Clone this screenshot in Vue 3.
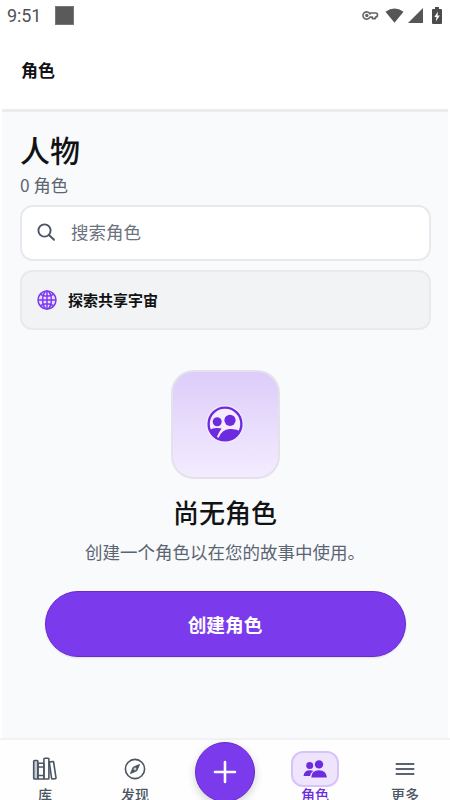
<script setup>
const emptyTitle = '尚无角色'
</script>

<template>
  <div class="screen">
    <header class="top">
      <div class="status">
        <span class="time">9:51</span>
        <span class="square"></span>
        <div class="status-icons">
          <svg class="key" width="17" height="11" viewBox="0 0 18 12" fill="none" stroke="#666" stroke-width="1.8">
            <path d="M8.4 4.3A4 4 0 1 0 8.4 7.7H11V9.4H14.4V7.6A1.8 1.8 0 0 0 14.6 3.3H8.8Z" stroke-linejoin="round" />
            <circle cx="5" cy="6" r="1" />
          </svg>
          <svg class="wifi" width="19" height="15" viewBox="0 0 20 15"><path d="M0.5 3.5Q10-3 19.5 3.5L10 15Z" fill="#565656" /></svg>
          <svg class="signal" width="15" height="15" viewBox="0 0 15 15"><path d="M15 0V15H0Z" fill="#565656" /></svg>
          <svg class="battery" width="10" height="17" viewBox="0 0 10 17">
            <path d="M3 0H7V2H9Q10 2 10 3V16Q10 17 9 17H1Q0 17 0 16V3Q0 2 1 2H3Z" fill="#4b4b4b" />
            <path d="M6 4.5L2.3 10H4.5L3.8 14.5L7.8 8.6H5.5Z" fill="#fff" />
          </svg>
        </div>
      </div>
      <div class="app-title">角色</div>
    </header>

    <main class="content">
      <h1>人物</h1>
      <p class="count">0 角色</p>
      <div class="search">
        <svg width="20" height="20" viewBox="0 0 20 20" fill="none" stroke="#4b5563" stroke-width="1.9" stroke-linecap="round">
          <circle cx="8.5" cy="8.5" r="6.1" /><path d="M13 13L18 17.8" />
        </svg>
        <span>搜索角色</span>
      </div>
      <div class="explore">
        <svg width="20" height="20" viewBox="0 0 20 20" fill="none" stroke="#7c3aed" stroke-width="1.5">
          <circle cx="10" cy="10" r="9" fill="#e9dcfd" /><ellipse cx="10" cy="10" rx="4.4" ry="9" />
          <path d="M10 1V19M1 10H19M3.4 4.4Q10 8.2 16.6 4.4M3.4 15.6Q10 11.8 16.6 15.6" />
        </svg>
        <span>探索共享宇宙</span>
      </div>

      <section class="empty">
        <div class="tile">
          <svg width="38" height="38" viewBox="-1 -1 38 38">
            <defs><clipPath id="disc"><circle cx="18" cy="18" r="16.7" /></clipPath></defs>
            <circle cx="18" cy="18" r="18.8" fill="#f5edff" />
            <g clip-path="url(#disc)" fill="#6d2be0">
              <path d="M2 24.2Q6 21.8 10 22Q13.5 22 14.6 22.6Q12 26 9.8 31L10 36H0Z" />
              <path d="M11.8 36V31.5Q14.5 24 22.7 23.1Q29 22.6 35 26V36Z" />
            </g>
            <circle cx="10.2" cy="15.7" r="4.5" fill="#6d2be0" />
            <circle cx="23" cy="14.3" r="5.6" fill="#6d2be0" />
            <circle cx="18" cy="18" r="16.4" fill="none" stroke="#6d2be0" stroke-width="2.4" />
          </svg>
        </div>
        <h2>{{ emptyTitle }}</h2>
        <p>创建一个角色以在您的故事中使用。</p>
        <button>创建角色</button>
      </section>
    </main>

    <nav>
      <div class="tab">
        <div class="icon">
          <svg width="26" height="24" viewBox="0 0 26 24" fill="none" stroke="#4b5563" stroke-width="1.6" stroke-linejoin="round">
            <rect x="1.7" y="3.5" width="4.2" height="18.5" rx=".8" fill="#c9cdd2" />
            <rect x="5.9" y="6.3" width="6" height="15.7" rx=".8" />
            <rect x="11.9" y="1.3" width="5" height="20.7" rx=".8" />
            <path d="M17.3 5.1L20.8 4.5Q21.5 4.4 21.6 5L24 20.8Q24.1 21.5 23.4 21.6L20.4 22Q19.7 22.1 19.6 21.4Z" />
            <path d="M6 10H12M6 18.5H12" />
          </svg>
        </div>
        <span>库</span>
      </div>
      <div class="tab">
        <div class="icon">
          <svg width="22" height="22" viewBox="0 0 22 22" fill="none" stroke="#4b5563" stroke-width="1.6">
            <circle cx="11" cy="11" r="9.6" />
            <path d="M15.5 6.5L12.8 12.8L6.5 15.5L9.2 9.2Z" fill="#4b5563" stroke-width="1" stroke-linejoin="round" />
            <circle cx="11" cy="11" r="1.4" fill="#c9cdd2" stroke="none" />
          </svg>
        </div>
        <span>发现</span>
      </div>
      <div class="tab middle">
        <div class="add">
          <svg width="24" height="24" viewBox="0 0 24 24" stroke="#fff" stroke-width="2.6" stroke-linecap="round"><path d="M12 2V22M2 12H22" /></svg>
        </div>
      </div>
      <div class="tab active">
        <div class="icon">
          <svg width="24" height="18" viewBox="0 0 24 18" fill="#6d2be0">
            <circle cx="6.7" cy="5.4" r="3.5" /><circle cx="16" cy="4.4" r="4.2" />
            <path d="M.5 16Q1.2 10.2 6.7 10.2Q9 10.2 10.2 11Q7.3 13 7 16Z" />
            <path d="M8.2 17.4Q8.6 10.2 16 10.2Q23 10.2 24 17.4Z" />
          </svg>
        </div>
        <span>角色</span>
      </div>
      <div class="tab">
        <div class="icon">
          <svg width="20" height="14" viewBox="0 0 20 14" stroke="#5b6470" stroke-width="1.8"><path d="M.7 2H19.3M.7 7H19.3M.7 12H19.3" /></svg>
        </div>
        <span>更多</span>
      </div>
    </nav>
  </div>
</template>

<style>
body { background: #fff; overflow: hidden; }
</style>

<style scoped>
* { box-sizing: border-box; margin: 0; padding: 0; }
svg { display: block; flex: none; }
.screen { width: 450px; height: 800px; padding: 0 2px; overflow: hidden; display: flex; flex-direction: column; background: #fff; font-family: "Noto Sans CJK SC", sans-serif; color: #111214; }
.top { height: 112px; flex: none; border-bottom: 3px solid #ebecee; }
.status { height: 31px; padding-left: 5px; display: flex; align-items: center; }
.time { font: 18px/31px Roboto, sans-serif; color: #505256; width: 48px; letter-spacing: -.1px; }
.square { width: 19px; height: 19px; background: #5a5a5a; border: 1px solid #777; }
.status-icons { margin-left: auto; margin-right: 6px; display: flex; align-items: center; }
.wifi { margin-left: 6px; }
.signal { margin-left: 4px; }
.battery { margin-left: 9px; }
.app-title { height: 78px; line-height: 78px; padding-left: 19px; font-size: 17px; font-weight: 700; }
.content { flex: 1; padding: 15px 18px 0; background: #f9fafc; min-height: 0; }
h1 { font-size: 30px; line-height: 44px; font-weight: 500; }
.count { font-size: 17.3px; line-height: 28px; color: #5c6572; margin-bottom: 6px; }
.search, .explore { display: flex; align-items: center; width: 411px; }
.search { height: 56px; border: 2px solid #e8e9ec; border-radius: 13px; background: #fff; padding-left: 14px; gap: 15px; padding-bottom: 3px; font-size: 17.5px; color: #6b7280; }
.explore { height: 60px; margin-top: 9px; border: 2px solid #e9eaec; border-radius: 12px; background: #f2f3f5; padding-left: 15px; gap: 11px; font-size: 15px; font-weight: 700; }
.explore span { padding-bottom: 2px; }
.empty { display: flex; flex-direction: column; align-items: center; padding-top: 40px; }
.tile { width: 109px; height: 109px; border: 2px solid #e5e0eb; border-radius: 23px; background: linear-gradient(#dccdf9, #f3ecfe); display: grid; place-items: center; padding-bottom: 2px; }
h2 { font-size: 26px; line-height: 38px; font-weight: 500; margin-top: 14px; }
.empty p { font-size: 17.5px; line-height: 26px; color: #5c6572; margin-top: 8px; white-space: nowrap; }
button { width: 361px; height: 66px; margin-top: 26px; padding-bottom: 2px; border: 1px solid #6929d2; border-radius: 33px; background: #7c3aed; color: #fff; font: 700 18.7px "Noto Sans CJK SC", sans-serif; box-shadow: 0 1px 2px #1118271f; }
nav { height: 62px; flex: none; border-top: 2px solid #f0f2f3; background: #fefefe; display: grid; grid-template-columns: repeat(5, 90px); margin: 0 -2px; }
.tab { display: flex; flex-direction: column; align-items: center; padding-top: 11px; font-size: 14px; font-weight: 500; line-height: 15px; color: #4b5563; }
.icon { width: 48px; height: 36px; display: grid; place-items: center; flex: none; border-radius: 12px; }
.active { color: #6d2be0; }
.active .icon { background: #eee4fd; border: 2px solid #d8c4f7; }
.middle { padding-top: 2px; }
.add { width: 60px; height: 60px; flex: none; border-radius: 50%; background: #7c3aed; border: 1px solid #6929d2; display: grid; place-items: center; box-shadow: 0 3px 8px #0000002e; }
</style>
